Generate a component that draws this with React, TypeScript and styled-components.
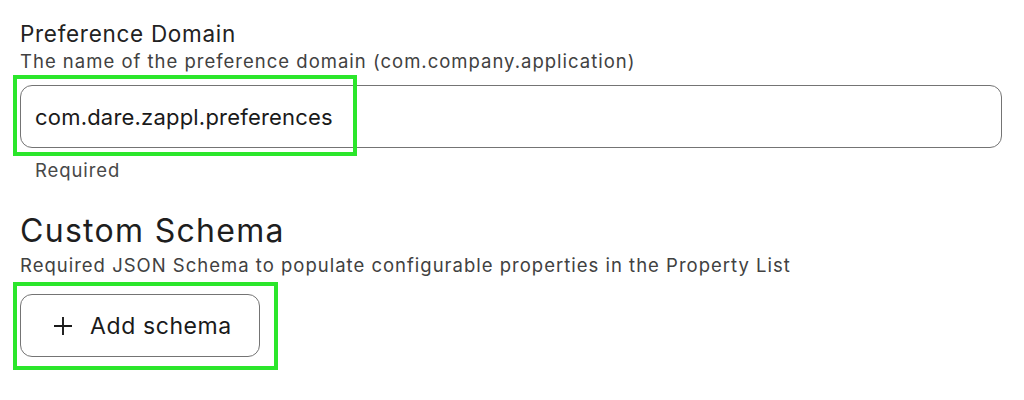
import React from "react";
import styled, { createGlobalStyle } from "styled-components";

const Global = createGlobalStyle`
  html, body { margin: 0; padding: 0; background: #fff; }
  body { font-family: Inter, "Noto Sans", sans-serif; color: #1f1f1f; }
`;

const Page = styled.div`
  width: 1024px;
  height: 400px;
  box-sizing: border-box;
  padding: 20px 22px 0 20px;
  display: flex;
  flex-direction: column;
`;

const Section = styled.section<{ $gap?: number }>`
  display: flex;
  flex-direction: column;
  margin-top: ${(p) => p.$gap ?? 0}px;
`;

const Label = styled.div`
  font-size: 22.5px;
  line-height: 28px;
  letter-spacing: 0.7px;
  color: #222;
`;

const Heading = styled.h2`
  margin: 0;
  font-weight: 400;
  font-size: 32px;
  line-height: 38px;
  letter-spacing: 1.3px;
  color: #1e1e1e;
`;

const Desc = styled.div<{ $mt: number }>`
  margin-top: ${(p) => p.$mt}px;
  font-size: 18.5px;
  line-height: 22px;
  letter-spacing: 1px;
  color: #414141;
`;

const Highlighted = styled.div<{ $mt: number }>`
  position: relative;
  display: flex;
  flex-direction: column;
  margin-top: ${(p) => p.$mt}px;
`;

const Highlight = styled.div<{ $w: number; $h: number; $top: number }>`
  position: absolute;
  left: -7px;
  top: ${(p) => p.$top}px;
  width: ${(p) => p.$w}px;
  height: ${(p) => p.$h}px;
  box-sizing: border-box;
  border: 4px solid #2be62b;
  pointer-events: none;
`;

const Input = styled.div`
  height: 63px;
  box-sizing: border-box;
  border: 1.5px solid #747474;
  border-radius: 12px;
  display: flex;
  align-items: center;
  padding: 0 14px;
  font-size: 22px;
  letter-spacing: 0.2px;
  color: #1a1a1a;
`;

const Hint = styled.div`
  margin: 11px 0 0 15px;
  font-size: 18.5px;
  line-height: 22px;
  letter-spacing: 0.9px;
  color: #484848;
`;

const Button = styled.button`
  width: 240px;
  height: 63px;
  box-sizing: border-box;
  border: 1.5px solid #747474;
  border-radius: 12px;
  background: #fff;
  display: flex;
  align-items: center;
  gap: 17px;
  padding: 0 0 0 32px;
  font-family: inherit;
  font-size: 23px;
  letter-spacing: 0.6px;
  color: #1a1a1a;
`;

const PlusIcon = () => (
  <svg width="20" height="20" viewBox="0 0 20 20" fill="none" stroke="#1a1a1a" strokeWidth="1.9">
    <path d="M10 1v18M1 10h18" />
  </svg>
);

export default function App() {
  return (
    <>
      <Global />
      <Page>
        <Section>
          <Label>Preference Domain</Label>
          <Desc $mt={2}>The name of the preference domain (com.company.application)</Desc>
          <Highlighted $mt={13}>
            <Input>com.dare.zappl.preferences</Input>
            <Highlight $top={-10} $w={344} $h={81} />
          </Highlighted>
          <Hint>Required</Hint>
        </Section>
        <Section $gap={31}>
          <Heading>Custom Schema</Heading>
          <Desc $mt={4}>Required JSON Schema to populate configurable properties in the Property List</Desc>
          <Highlighted $mt={18}>
            <Button>
              <PlusIcon />
              Add schema
            </Button>
            <Highlight $top={-12} $w={265} $h={88} />
          </Highlighted>
        </Section>
      </Page>
    </>
  );
}
